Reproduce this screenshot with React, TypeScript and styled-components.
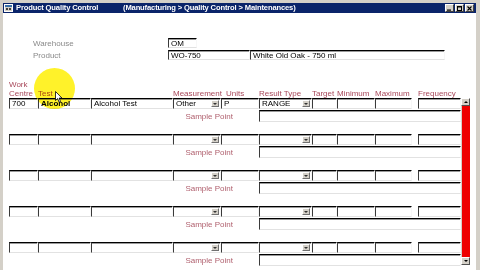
import React from "react";
import styled, { createGlobalStyle } from "styled-components";

const COLS = "29px 53px 82px 48px 38px 53px 25px 38px 37px 6px 43px";

const GlobalStyle = createGlobalStyle`
  html, body {
    margin: 0;
    padding: 0;
    width: 480px;
    height: 270px;
    overflow: hidden;
    background: #d4d0c8;
  }
  body {
    font-family: "Liberation Sans", Arial, sans-serif;
    font-size: 8px;
  }
  * {
    box-sizing: border-box;
  }
`;

const Window = styled.div`
  width: 480px;
  height: 270px;
  display: flex;
  flex-direction: column;
  padding: 3px 4px 0 3px;
  background: #d4d0c8;
`;

const TitleBar = styled.div`
  flex: none;
  height: 10px;
  display: flex;
  align-items: center;
  padding: 0 2px 0 1px;
  background: #0a246a;
  color: #fff;
  font-weight: bold;
  font-size: 7.6px;
  letter-spacing: -0.15px;
  line-height: 10px;
  white-space: nowrap;
`;

const TitleIcon = styled.svg`
  width: 9px;
  height: 8px;
  margin-right: 3px;
  flex: none;
`;

const TitleMain = styled.span`
  width: 107px;
  flex: none;
`;

const TitlePath = styled.span`
  flex: 1;
`;

const Controls = styled.div`
  display: flex;
  gap: 1px;
`;

const ControlButton = styled.div`
  width: 9px;
  height: 8px;
  background: #d4d0c8;
  border-top: 1px solid #fff;
  border-left: 1px solid #fff;
  border-right: 1px solid #404040;
  border-bottom: 1px solid #404040;
  display: flex;
  align-items: center;
  justify-content: center;

  svg {
    width: 5px;
    height: 5px;
  }
`;

const Client = styled.div`
  flex: 1;
  position: relative;
  background: #fff;
  overflow: hidden;
`;

const HeaderForm = styled.div`
  display: grid;
  grid-template-columns: 135px 82px 195px;
  grid-auto-rows: 10px;
  row-gap: 2px;
  margin: 25px 0 0 30px;
`;

const FormLabel = styled.div`
  color: #8a8a8a;
  line-height: 10px;
  padding-top: 1px;
`;

const Field = styled.div<{ $bold?: boolean; $short?: boolean }>`
  height: 100%;
  width: ${(p) => (p.$short ? "29px" : "auto")};
  display: flex;
  align-items: center;
  padding-left: 2px;
  background: #fff;
  border-top: 1px solid #000;
  border-left: 1px solid #3a3a3a;
  border-bottom: 1px solid #e2e2e2;
  border-right: 1px solid #f7f7f7;
  box-shadow: inset 0 1px 0 #9a9a9a;
  color: #000;
  font-size: 8px;
  font-weight: ${(p) => (p.$bold ? "bold" : "normal")};
  line-height: 9px;
  white-space: nowrap;
  overflow: hidden;
`;

const DropArrow = styled.div`
  flex: none;
  width: 8px;
  height: 7px;
  margin-left: auto;
  margin-right: 1px;
  background: #d4d0c8;
  border-top: 1px solid #fff;
  border-left: 1px solid #fff;
  border-right: 1px solid #707070;
  border-bottom: 1px solid #707070;
  display: flex;
  align-items: center;
  justify-content: center;

  &::after {
    content: "";
    border-left: 2px solid transparent;
    border-right: 2px solid transparent;
    border-top: 2px solid #333;
  }
`;

const Lines = styled.div`
  margin-top: 20px;
  padding-left: 6px;
`;

const LinesHeader = styled.div`
  display: grid;
  grid-template-columns: ${COLS};
  height: 18px;
  align-items: end;
`;

const HeadLabel = styled.div<{ $col: number; $indent?: number }>`
  grid-column: ${(p) => p.$col};
  padding-left: ${(p) => p.$indent ?? 0}px;
  color: #a8485a;
  line-height: 9px;
  white-space: nowrap;
`;

const Body = styled.div`
  display: flex;
  align-items: flex-start;
`;

const Rows = styled.div`
  width: 452px;
  flex: none;
`;

const Group = styled.div`
  display: grid;
  grid-template-columns: ${COLS};
  grid-template-rows: 11px 12px;
  row-gap: 1px;
  margin-bottom: 12px;
`;

const SampleLabel = styled.div`
  grid-column: 1 / 6;
  text-align: right;
  padding-right: 26px;
  color: #b0606e;
  line-height: 10px;
  padding-top: 2px;
`;

const SampleField = styled(Field)`
  grid-column: 6 / 12;
`;

const Scrollbar = styled.div`
  width: 9px;
  height: 167px;
  flex: none;
  display: flex;
  flex-direction: column;
  background: #d4d0c8;
`;

const ScrollArrow = styled.div<{ $down?: boolean }>`
  height: 8px;
  flex: none;
  background: #d4d0c8;
  border-top: 1px solid #fff;
  border-left: 1px solid #fff;
  border-right: 1px solid #505050;
  border-bottom: 1px solid #505050;
  display: flex;
  align-items: center;
  justify-content: center;

  &::after {
    content: "";
    border-left: 2px solid transparent;
    border-right: 2px solid transparent;
    ${(p) =>
      p.$down ? "border-top: 2px solid #000;" : "border-bottom: 2px solid #000;"}
  }
`;

const ScrollTrack = styled.div`
  flex: 1;
  margin-left: 1px;
  background: #ee0000;
`;

const Highlight = styled.div`
  position: absolute;
  left: 31px;
  top: 55px;
  width: 41px;
  height: 41px;
  border-radius: 50%;
  background: radial-gradient(circle, #fff22a 0%, #fff22a 80%, #fff66a 100%);
  mix-blend-mode: multiply;
  pointer-events: none;
`;

const Pointer = styled.svg`
  position: absolute;
  left: 52px;
  top: 78px;
  width: 8px;
  height: 12px;
`;

type Cell = { text?: string; bold?: boolean; select?: boolean; gap?: boolean };

const firstRow: Cell[] = [
  { text: "700" },
  { text: "Alcohol", bold: true },
  { text: "Alcohol Test" },
  { text: "Other", select: true },
  { text: "P" },
  { text: "RANGE", select: true },
  {},
  {},
  {},
  { gap: true },
  {},
];

const emptyRow: Cell[] = [
  {},
  {},
  {},
  { select: true },
  {},
  { select: true },
  {},
  {},
  {},
  { gap: true },
  {},
];

const rows = [firstRow, emptyRow, emptyRow, emptyRow, emptyRow];

const LineGroup = ({ cells }: { cells: Cell[] }) => (
  <Group>
    {cells.map((c, i) =>
      c.gap ? (
        <div key={i} />
      ) : (
        <Field key={i} $bold={c.bold}>
          {c.text}
          {c.select && <DropArrow />}
        </Field>
      )
    )}
    <SampleLabel>Sample Point</SampleLabel>
    <SampleField />
  </Group>
);

export default function App() {
  return (
    <>
      <GlobalStyle />
      <Window>
        <TitleBar>
          <TitleIcon viewBox="0 0 9 8">
            <rect x="0.5" y="0.5" width="8" height="7" fill="#d4d0c8" stroke="#fff" />
            <rect x="1" y="1" width="7" height="2" fill="#3a6ea5" />
            <rect x="2" y="4" width="2" height="2" fill="#404040" />
            <rect x="5" y="4" width="2" height="2" fill="#404040" />
          </TitleIcon>
          <TitleMain>Product Quality Control</TitleMain>
          <TitlePath>(Manufacturing &gt; Quality Control &gt; Maintenances)</TitlePath>
          <Controls>
            <ControlButton>
              <svg viewBox="0 0 5 5">
                <rect x="0" y="3.5" width="4" height="1.2" fill="#000" />
              </svg>
            </ControlButton>
            <ControlButton>
              <svg viewBox="0 0 5 5">
                <rect x="0.5" y="0.5" width="4" height="4" fill="none" stroke="#000" />
                <rect x="0.5" y="0.5" width="4" height="1" fill="#000" />
              </svg>
            </ControlButton>
            <ControlButton>
              <svg viewBox="0 0 5 5">
                <path d="M0.5 0.5 L4.5 4.5 M4.5 0.5 L0.5 4.5" stroke="#000" strokeWidth="1.1" />
              </svg>
            </ControlButton>
          </Controls>
        </TitleBar>

        <Client>
          <HeaderForm>
            <FormLabel>Warehouse</FormLabel>
            <Field $short>OM</Field>
            <div />
            <FormLabel>Product</FormLabel>
            <Field>WO-750</Field>
            <Field>White Old Oak - 750 ml</Field>
          </HeaderForm>

          <Lines>
            <LinesHeader>
              <HeadLabel $col={1}>
                Work
                <br />
                Centre
              </HeadLabel>
              <HeadLabel $col={2}>Test</HeadLabel>
              <HeadLabel $col={4}>Measurement</HeadLabel>
              <HeadLabel $col={5} $indent={5}>
                Units
              </HeadLabel>
              <HeadLabel $col={6}>Result Type</HeadLabel>
              <HeadLabel $col={7}>Target</HeadLabel>
              <HeadLabel $col={8}>Minimum</HeadLabel>
              <HeadLabel $col={9}>Maximum</HeadLabel>
              <HeadLabel $col={11}>Frequency</HeadLabel>
            </LinesHeader>
            <Body>
              <Rows>
                {rows.map((cells, i) => (
                  <LineGroup key={i} cells={cells} />
                ))}
              </Rows>
              <Scrollbar>
                <ScrollArrow />
                <ScrollTrack />
                <ScrollArrow $down />
              </Scrollbar>
            </Body>
          </Lines>

          <Highlight />
          <Pointer viewBox="0 0 8 12">
            <path
              d="M0.5 0.5 L0.5 9.5 L2.6 7.6 L4.2 11.2 L5.6 10.6 L4.1 7.1 L7 7.1 Z"
              fill="#fff"
              stroke="#000"
              strokeWidth="0.8"
              strokeLinejoin="round"
            />
          </Pointer>
        </Client>
      </Window>
    </>
  );
}
